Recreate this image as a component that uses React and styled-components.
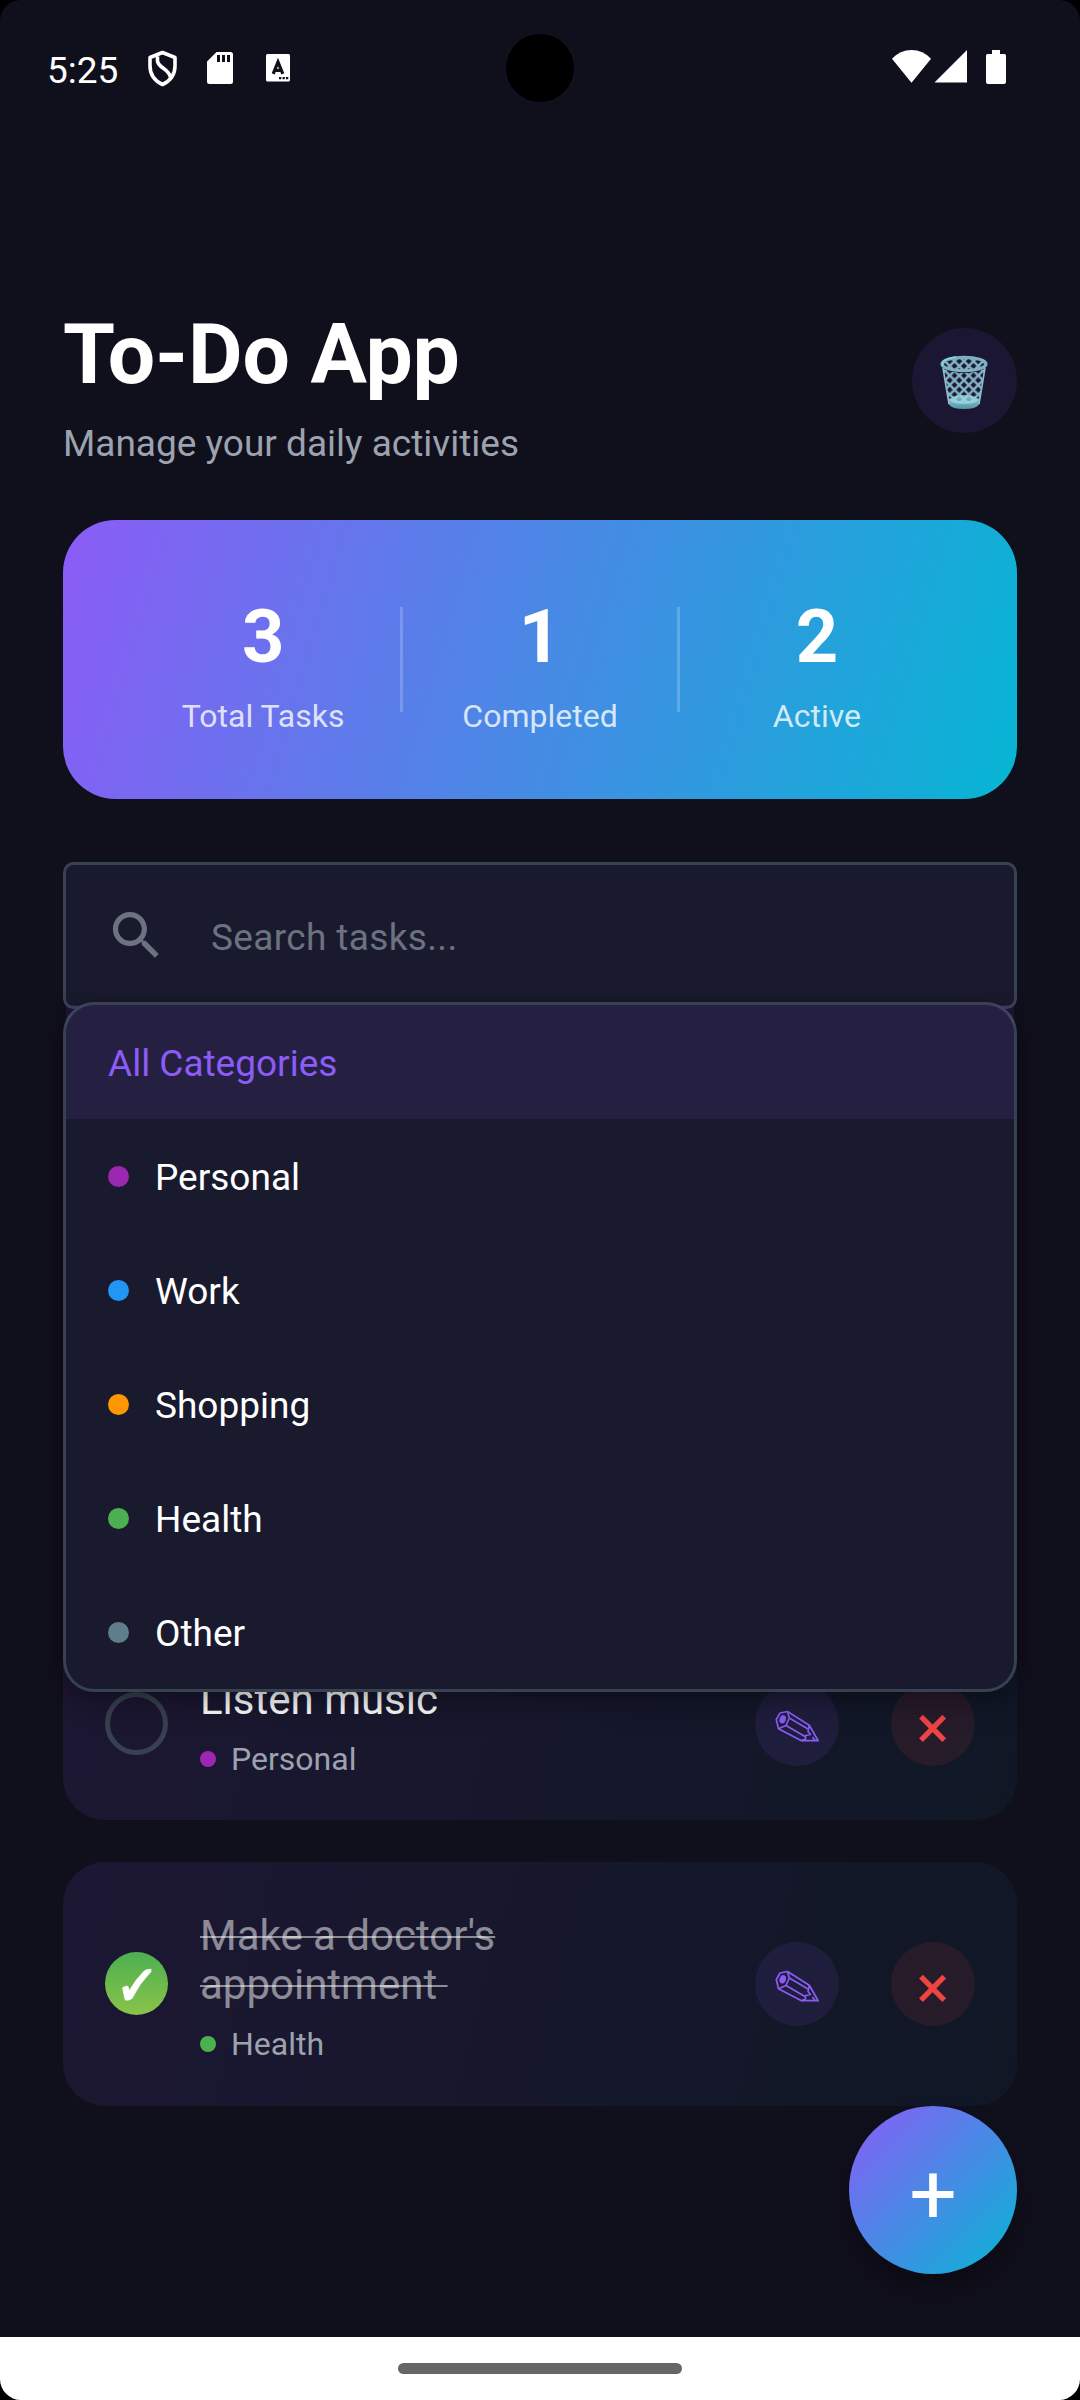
import React from "react";
import styled, { createGlobalStyle } from "styled-components";

const GlobalStyle = createGlobalStyle`
  * { box-sizing: border-box; }
  body { margin: 0; background: #000; }
`;

const Screen = styled.main`
  position: relative;
  display: flex;
  flex-direction: column;
  width: 1080px;
  height: 2400px;
  overflow: hidden;
  border-radius: 21px;
  background: #100f1c;
  color: #fff;
  font-family: Roboto, "Noto Sans", sans-serif;
`;

const StatusBar = styled.div`
  display: flex;
  justify-content: space-between;
  height: 137px;
  padding: 0 74px 0 47px;
`;

const StatusGroup = styled.div`
  display: flex;
  align-items: center;
  height: 137px;
`;

const Clock = styled.span`
  width: 72px;
  margin-right: 29px;
  font-size: 37px;
  line-height: 43px;
  padding-top: 4px;
`;

const Camera = styled.div`
  width: 68px;
  height: 68px;
  border-radius: 50%;
  background: #000;
  position: absolute;
  top: 34px;
  left: 506px;
`;

const Content = styled.div`
  display: flex;
  flex-direction: column;
  flex: 1;
  padding: 168px 63px 0;
`;

const Header = styled.header`
  display: flex;
  justify-content: space-between;
  align-items: flex-start;
  height: 215px;
`;

const Title = styled.h1`
  margin: 0;
  padding: 1px 0 18px;
  font-size: 84px;
  line-height: 98px;
  font-weight: 700;
  letter-spacing: -0.15px;
`;

const Subtitle = styled.p`
  margin: 0;
  font-size: 37px;
  line-height: 43px;
  color: #9ca3af;
`;

const ClearButton = styled.button`
  width: 105px;
  height: 105px;
  margin-top: 23px;
  padding: 0;
  border: 0;
  border-radius: 50%;
  background: #1b1732;
  svg { display: block; }
`;

const Stats = styled.section`
  display: flex;
  align-items: center;
  height: 279px;
  padding: 0 63px;
  border-radius: 52.5px;
  background: linear-gradient(106.3deg, #8b5cf6, #06b6d4);
`;

const Stat = styled.div`
  flex: 1;
  display: flex;
  flex-direction: column;
  align-items: center;
  gap: 18px;
  padding-top: 10px;
`;

const StatValue = styled.strong`
  font-size: 74px;
  line-height: 86px;
  font-weight: 700;
`;

const StatLabel = styled.span`
  font-size: 32px;
  line-height: 37px;
  color: rgba(255, 255, 255, 0.8);
`;

const StatDivider = styled.div`
  width: 2.625px;
  height: 105px;
  background: rgba(255, 255, 255, 0.2);
`;

const Filters = styled.div`
  position: relative;
  z-index: 1;
  height: 147px;
  margin: 63px 0 618px;
`;

const SearchField = styled.div`
  display: flex;
  align-items: center;
  gap: 43px;
  height: 147px;
  padding: 0 39px;
  border: 3px solid #374151;
  border-radius: 10.5px;
  background: #1a1a2e;
  color: #6b7280;
  svg { display: block; margin-bottom: 1px; }
`;

const Placeholder = styled.span`
  font-size: 37px;
  line-height: 43px;
  letter-spacing: 0.35px;
  padding-top: 4px;
`;

const Menu = styled.div`
  position: absolute;
  top: 140px;
  left: 0;
  right: 0;
  height: 690px;
  border: 3px solid #374151;
  border-radius: 31.5px;
  background: #1a1a2e;
  box-shadow: 0 12px 30px rgba(0, 0, 0, 0.3), 0 0 8px rgba(0, 0, 0, 0.15);
`;

const MenuItem = styled.div`
  display: flex;
  align-items: center;
  gap: 26px;
  height: 114px;
  font-size: 37px;
  line-height: 43px;
  padding: 0 42px;
  color: ${(p) => (p.$active ? "#8b5cf6" : "#fff")};
  background: ${(p) => (p.$active ? "rgba(139, 92, 246, 0.1)" : "transparent")};
`;

const MenuLabel = styled.span`
  padding-top: 3px;
`;

const Dot = styled.i`
  flex: none;
  width: ${(p) => p.$size}px;
  height: ${(p) => p.$size}px;
  border-radius: 50%;
  background: ${(p) => p.$color};
`;

const TaskList = styled.section`
  display: flex;
  flex-direction: column;
  gap: 42px;
`;

const TaskCard = styled.article`
  display: flex;
  align-items: center;
  height: ${(p) => (p.$tall ? 244 : 193)}px;
  padding: 0 42px;
  border-radius: 42px;
  background: linear-gradient(
    ${(p) => (p.$tall ? 104.3 : 101.4)}deg,
    rgba(139, 92, 246, 0.1),
    rgba(6, 182, 212, 0.05)
  );
`;

const CheckCircle = styled.div`
  flex: none;
  width: 63px;
  height: 63px;
  margin: 0 32px 1px 0;
  border-radius: 50%;
  border: ${(p) => (p.$done ? "0" : "5px solid #374151")};
  background: ${(p) => (p.$done ? "linear-gradient(#4caf50, #8bc34a)" : "transparent")};
  svg { display: block; }
`;

const TaskBody = styled.div`
  flex: 1;
  display: flex;
  flex-direction: column;
  gap: 17px;
  padding-top: 6px;
`;

const TaskTitle = styled.div`
  font-size: 42px;
  line-height: 49px;
  white-space: pre;
  color: ${(p) => (p.$done ? "rgba(255, 255, 255, 0.5)" : "#fff")};
  text-decoration: ${(p) => (p.$done ? "line-through 2px" : "none")};
`;

const TaskMeta = styled.div`
  display: flex;
  align-items: center;
  gap: 15px;
  font-size: 32px;
  line-height: 37px;
  color: #9ca3af;
  ${Dot} { margin-bottom: 2px; }
`;

const Actions = styled.div`
  display: flex;
  gap: 52px;
`;

const ActionButton = styled.button`
  width: 84px;
  height: 84px;
  padding: 0;
  border: 0;
  border-radius: 50%;
  color: ${(p) => (p.$danger ? "#ef4444" : "#8b5cf6")};
  background: ${(p) => (p.$danger ? "rgba(239, 68, 68, 0.1)" : "rgba(139, 92, 246, 0.1)")};
  svg { display: block; }
`;

const Fab = styled.button`
  position: absolute;
  left: 849px;
  top: 2106px;
  width: 168px;
  height: 168px;
  padding: 10px 0 0;
  border: 0;
  border-radius: 50%;
  background: linear-gradient(135deg, #8b5cf6, #06b6d4);
  box-shadow: 0 16px 28px rgba(0, 0, 0, 0.3);
  color: #fff;
  font-family: Roboto, sans-serif;
  font-size: 84px;
  line-height: 98px;
`;

const NavBar = styled.footer`
  display: flex;
  justify-content: center;
  align-items: center;
  height: 63px;
  background: #fff;
`;

const Handle = styled.div`
  width: 284px;
  height: 11px;
  border-radius: 6px;
  background: #666;
`;

const LeftIcons = () => (
  <svg width="150" height="40" viewBox="148 50 150 40" fill="#fff">
    <path d="M162.500 53.500 L175 58.500 V67 C175 76 170 82 162.500 85.500 C155 82 150 76 150 67 V58.500 Z M157.500 57.500 V62 C158 69 170 70 170.500 79" fill="none" stroke="#fff" strokeWidth="3.600" strokeLinejoin="round" />
    <path fillRule="evenodd" d="M216.500 53 H230.500 Q233 53 233 55.500 V82.500 Q233 85 230.500 85 H209.500 Q207 85 207 82.500 V62.500 Z M217 56 V63 H220 V56 Z M222 56 V63 H225 V56 Z M227 56 V63 H230 V56 Z" />
    <rect x="266" y="55" width="24" height="27.500" rx="1.500" />
    <path d="M273.200 74.800 L278 63 L282.800 74.800 M274.800 71.300 H281.200" fill="none" stroke="#100f1c" strokeWidth="3.200" />
    <path d="M279 78 h2.300 v2.300 h-2.300z M282.500 78 h2.300 v2.300 h-2.300z M286 78 h2.300 v2.300 h-2.300z" fill="#100f1c" />
  </svg>
);

const RightIcons = () => (
  <svg width="116" height="40" viewBox="890 50 116 40" fill="#fff">
    <path d="M892 59.800 Q900 51 911.500 51 T931 59.800 L911.500 83.700 Z" />
    <path d="M934.500 83.500 L967 51 V83.500 Z" />
    <path d="M992 51 h8 v4 h4.500 q1.500 0 1.500 1.500 V83 q0 2 -2 2 H988 q-2 0 -2 -2 V56.500 q0 -1.500 1.500 -1.500 H992 Z" />
  </svg>
);

const TrashIcon = () => (
  <svg width="105" height="105" viewBox="0 0 105 105">
    <defs>
      <pattern id="mesh" width="9.500" height="9.500" x="47.250" y="38" patternUnits="userSpaceOnUse">
        <path d="M-1 -1 L10.500 10.500 M10.500 -1 L-1 10.500" stroke="#85b4c6" strokeWidth="2.500" />
      </pattern>
      <linearGradient id="base" x1="0" y1="0" x2="0" y2="1">
        <stop offset="0" stopColor="#8cc6d3" />
        <stop offset="1" stopColor="#5594a5" />
      </linearGradient>
    </defs>
    <ellipse cx="52" cy="36" rx="21" ry="6.500" fill="url(#mesh)" />
    <path d="M31.500 41 Q52 49 72.500 41 L67.300 74 Q52 81 36.700 74 Z" fill="url(#mesh)" />
    <path d="M36.300 70 Q52 77 67.700 70 L67 76.500 Q64 81 52 81 Q40 81 37 76.500 Z" fill="url(#base)" />
    <ellipse cx="52" cy="71.500" rx="13.800" ry="4.600" fill="#9bdce8" opacity="0.750" />
    <path d="M31 40 L37 76 M73 40 L67 76" stroke="#8dbccb" strokeWidth="1.600" />
    <ellipse cx="52" cy="36" rx="22" ry="6.700" fill="none" stroke="#7fb0c2" strokeWidth="3.200" />
    <path d="M30.500 38 Q29 31 44 29.200" fill="none" stroke="#7fd3df" strokeWidth="1.800" />
  </svg>
);

const SearchIcon = () => (
  <svg width="63" height="63" viewBox="0 0 24 24" fill="currentColor">
    <path d="M15.500 14h-.79l-.28-.27C15.410 12.590 16 11.110 16 9.500 16 5.910 13.090 3 9.500 3S3 5.910 3 9.500 5.910 16 9.500 16c1.610 0 3.090-.59 4.230-1.570l.27.28v.79l5 4.990L20.490 19l-4.990-5zm-6 0C7.010 14 5 11.990 5 9.500S7.010 5 9.500 5 14 7.010 14 9.500 11.990 14 9.500 14z" />
  </svg>
);

const PencilIcon = () => (
  <svg width="84" height="84" viewBox="0 0 84 84" fill="none" stroke="currentColor" strokeWidth="1.700" strokeLinejoin="round">
    <path d="M21.300 37.500 L25 31 L32.500 29.500 L54.300 43.300 L63.200 58.700 H46.500 L23.500 46.700 Z" />
    <path d="M32.500 29.500 L34.300 36 L31 43.500 L23.500 46.700 M34.300 36 L53 47 M31 43.500 L50 54.500" />
    <path d="M54.300 43.300 L53 49.500 L55.500 52.500 L50.500 53.500 L50.500 57 L46.500 58.700 M57.500 55 L60 58.500" />
    <ellipse cx="27.700" cy="37.300" rx="2.300" ry="3.400" transform="rotate(20 27.700 37.300)" fill="currentColor" />
  </svg>
);

const CrossIcon = () => (
  <svg width="84" height="84" viewBox="0 0 84 84" stroke="currentColor" strokeWidth="5.300">
    <path d="M30 34.600 L53.200 58.200 M53.200 34.600 L30 58.200" />
  </svg>
);

const CheckIcon = () => (
  <svg width="63" height="63" viewBox="0 0 63 63" fill="#fff">
    <path d="M17.700 35.800 Q20 33.800 22.800 34.300 Q23.800 36 24.200 39 Q31 27 39.500 18.800 Q42.500 16.800 46.200 17.400 Q45 18.600 46.300 19.300 Q34 32 27 46.500 Q24 48.800 20.300 47.900 Q18.300 41 17.700 35.800 Z" stroke="#fff" strokeWidth="0.800" />
  </svg>
);

const stats = [
  ["3", "Total Tasks"],
  ["1", "Completed"],
  ["2", "Active"],
];

const categories = [
  ["Personal", "#9c27b0"],
  ["Work", "#2196f3"],
  ["Shopping", "#ff9800"],
  ["Health", "#4caf50"],
  ["Other", "#607d8b"],
];

const tasks = [
  { title: "Listen music", category: "Personal", color: "#9c27b0", done: false },
  { title: "Make a doctor's\nappointment ", category: "Health", color: "#4caf50", done: true },
];

export default function App() {
  return (
    <Screen>
      <GlobalStyle />
      <StatusBar>
        <StatusGroup>
          <Clock>5:25</Clock>
          <LeftIcons />
        </StatusGroup>
        <StatusGroup>
          <RightIcons />
        </StatusGroup>
      </StatusBar>
      <Camera />
      <Content>
        <Header>
          <div>
            <Title>To-Do App</Title>
            <Subtitle>Manage your daily activities</Subtitle>
          </div>
          <ClearButton aria-label="Clear">
            <TrashIcon />
          </ClearButton>
        </Header>
        <Stats>
          {stats.map(([value, label], i) => (
            <React.Fragment key={label}>
              {i > 0 && <StatDivider />}
              <Stat>
                <StatValue>{value}</StatValue>
                <StatLabel>{label}</StatLabel>
              </Stat>
            </React.Fragment>
          ))}
        </Stats>
        <Filters>
          <SearchField>
            <SearchIcon />
            <Placeholder>Search tasks...</Placeholder>
          </SearchField>
          <Menu>
            <MenuItem $active>
              <MenuLabel>All Categories</MenuLabel>
            </MenuItem>
            {categories.map(([name, color]) => (
              <MenuItem key={name}>
                <Dot $size={21} $color={color} />
                <MenuLabel>{name}</MenuLabel>
              </MenuItem>
            ))}
          </Menu>
        </Filters>
        <TaskList>
          {tasks.map((task) => (
            <TaskCard key={task.title} $tall={task.done}>
              <CheckCircle $done={task.done}>{task.done && <CheckIcon />}</CheckCircle>
              <TaskBody>
                <TaskTitle $done={task.done}>{task.title}</TaskTitle>
                <TaskMeta>
                  <Dot $size={16} $color={task.color} />
                  {task.category}
                </TaskMeta>
              </TaskBody>
              <Actions>
                <ActionButton aria-label="Edit">
                  <PencilIcon />
                </ActionButton>
                <ActionButton $danger aria-label="Delete">
                  <CrossIcon />
                </ActionButton>
              </Actions>
            </TaskCard>
          ))}
        </TaskList>
      </Content>
      <Fab>+</Fab>
      <NavBar>
        <Handle />
      </NavBar>
    </Screen>
  );
}
